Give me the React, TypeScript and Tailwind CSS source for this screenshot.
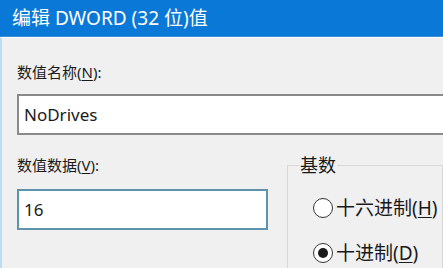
const font = { fontFamily: '"Noto Sans", "Noto Sans CJK SC", sans-serif' }

function Radio({ label, hotkey, checked }: { label: string; hotkey: string; checked?: boolean }) {
  return (
    <div className="flex items-center h-[22px]">
      <span className="w-[20px] h-[20px] rounded-full border-[1.5px] border-[#333] bg-white flex items-center justify-center">
        {checked && <span className="w-[10px] h-[10px] rounded-full bg-[#1a1a1a]" />}
      </span>
      <span className="ml-[3px] text-[19px] leading-[22px] text-[#1a1a1a] whitespace-nowrap">
        {label}(<span className="underline underline-offset-2">{hotkey}</span>)
      </span>
    </div>
  )
}

export default function App() {
  return (
    <div className="w-[443px] h-[268px] overflow-hidden flex flex-col bg-[#f0f0f0]" style={font}>
      <div className="h-[37px] shrink-0 bg-[#0a78d7] flex items-center pl-[12px] border-b border-[#3d8fd8]">
        <span className="text-white text-[19px] leading-none">编辑 DWORD (32 位)值</span>
      </div>
      <div className="flex-1 border-l-[2px] border-[#bcdcf2] border-t border-t-white pl-[15px] pt-[24px]">
        <div className="text-[15px] leading-[20px] text-[#1a1a1a]">
          数值名称(<span className="underline underline-offset-2">N</span>):
        </div>
        <div className="mt-[12px] w-[480px] h-[41px] border-[2px] border-[#8a8a8a] bg-white flex items-center pl-[5px]">
          <span className="text-[17px] text-[#1a1a1a]">NoDrives</span>
        </div>
        <div className="flex mt-[20px]">
          <div className="w-[251px] shrink-0">
            <div className="text-[15px] leading-[20px] text-[#1a1a1a]">
              数值数据(<span className="underline underline-offset-2">V</span>):
            </div>
            <div className="mt-[14px] h-[41px] border-[2px] border-[#5e93ad] bg-white flex items-center pl-[5px]">
              <span className="text-[17px] text-[#1a1a1a]">16</span>
            </div>
          </div>
          <fieldset className="ml-[19px] w-[200px] h-[140px] border border-[#d8d8d8] pl-[25px] pt-[22px]">
            <legend className="-ml-[14px] px-[1px] text-[18px] leading-[20px] text-[#1a1a1a]">基数</legend>
            <div className="flex flex-col gap-[23px]">
              <Radio label="十六进制" hotkey="H" />
              <Radio label="十进制" hotkey="D" checked />
            </div>
          </fieldset>
        </div>
      </div>
    </div>
  )
}
